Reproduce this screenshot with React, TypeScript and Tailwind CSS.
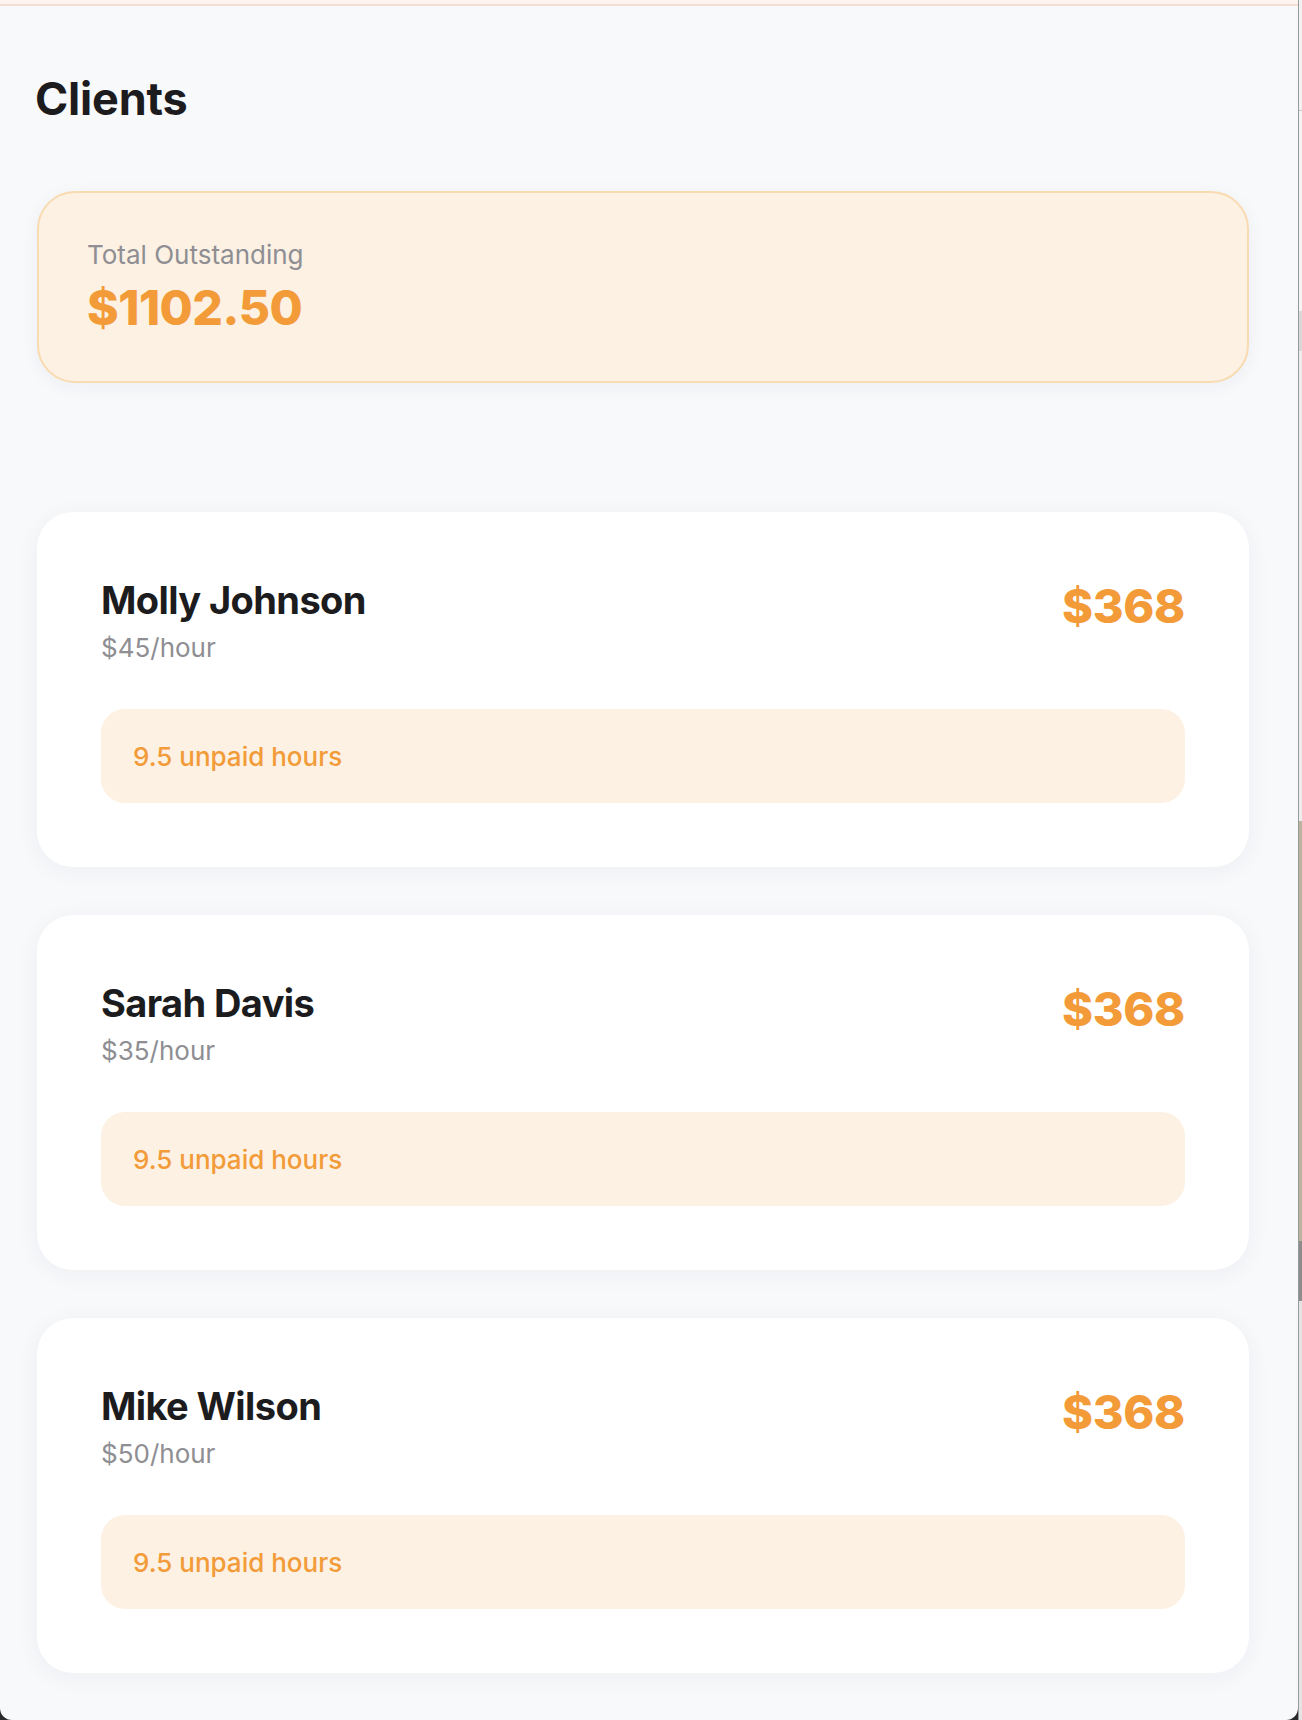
import React from "react";

const clients = [
  { name: "Molly Johnson", rate: "$45/hour", amount: "$368", hours: "9.5 unpaid hours" },
  { name: "Sarah Davis", rate: "$35/hour", amount: "$368", hours: "9.5 unpaid hours" },
  { name: "Mike Wilson", rate: "$50/hour", amount: "$368", hours: "9.5 unpaid hours" },
];

function ClientCard({ c }: { c: (typeof clients)[number] }) {
  return (
    <div className="rounded-[36px] bg-white p-16 shadow-[0_4px_24px_rgba(20,30,60,0.05)]">
      <div className="flex items-start justify-between">
        <div className="flex flex-col">
          <div className="text-[38px] leading-[48px] font-bold tracking-[-0.6px] text-[#1c1c1e]">{c.name}</div>
          <div className="mt-[8px] text-[26px] leading-[32px] text-[#8e8e93]">{c.rate}</div>
        </div>
        <div className="mt-[3px] text-[47px] leading-[54px] font-extrabold tracking-[-0.3px] text-[#f29b38]">{c.amount}</div>
      </div>
      <div className="mt-[45px] flex h-[94px] items-center rounded-[24px] bg-[#fcf1e3] pl-8">
        <span className="text-[26px] font-medium text-[#f29b38]">{c.hours}</span>
      </div>
    </div>
  );
}

export default function App() {
  return (
    <div
      className="flex h-[1720px] w-[1302px] bg-[#2a2a2a]"
      style={{ fontFamily: "Inter, 'Noto Sans', 'Liberation Sans', sans-serif" }}
    >
      <div className="flex h-[1720px] w-[1298px] flex-col overflow-hidden rounded-b-[12px] bg-[#f8f9fb]">
        <div className="h-[4px] bg-[#fdf4ef]" />
        <div className="h-[2px] bg-[#f3ddd4]" />
        <div className="flex w-[1249px] flex-col pl-[37px] pt-[66px]">
          <h1 className="-ml-[2px] text-[45px] leading-[53px] font-bold tracking-[-0.2px] text-[#1c1c1e]">Clients</h1>
          <div className="mt-[66px] flex flex-col gap-[8px] rounded-[38px] border-2 border-[#f9dbb1] bg-[#fcf1e3] pl-12 pr-12 pt-[47px] pb-[43px] shadow-[0_4px_18px_rgba(20,30,60,0.05)]">
            <div className="text-[26px] leading-[30px] text-[#8e8e93]">Total Outstanding</div>
            <div className="text-[48px] leading-[60px] font-extrabold tracking-[-0.5px] text-[#f29b38]">$1102.50</div>
          </div>
          <div className="mt-[129px] flex flex-col gap-12">
            {clients.map((c) => (
              <ClientCard key={c.name} c={c} />
            ))}
          </div>
        </div>
      </div>
      <div className="flex h-[1720px] w-[4px] flex-col border-l border-[#9a9a9a] bg-[#e9e9ea]">
        <div className="h-[110px] bg-[#f2f2f3]" />
        <div className="h-[1px] bg-[#c8c8c8]" />
        <div className="h-[200px] bg-[#f4f4f5]" />
        <div className="h-[40px] bg-[#d8d8d8]" />
        <div className="h-[470px] bg-[#ededee]" />
        <div className="h-[420px] bg-[#b9b3a0]" />
        <div className="h-[60px] bg-[#8c8c8c]" />
        <div className="flex-1 bg-[#e4e4e6]" />
      </div>
    </div>
  );
}
